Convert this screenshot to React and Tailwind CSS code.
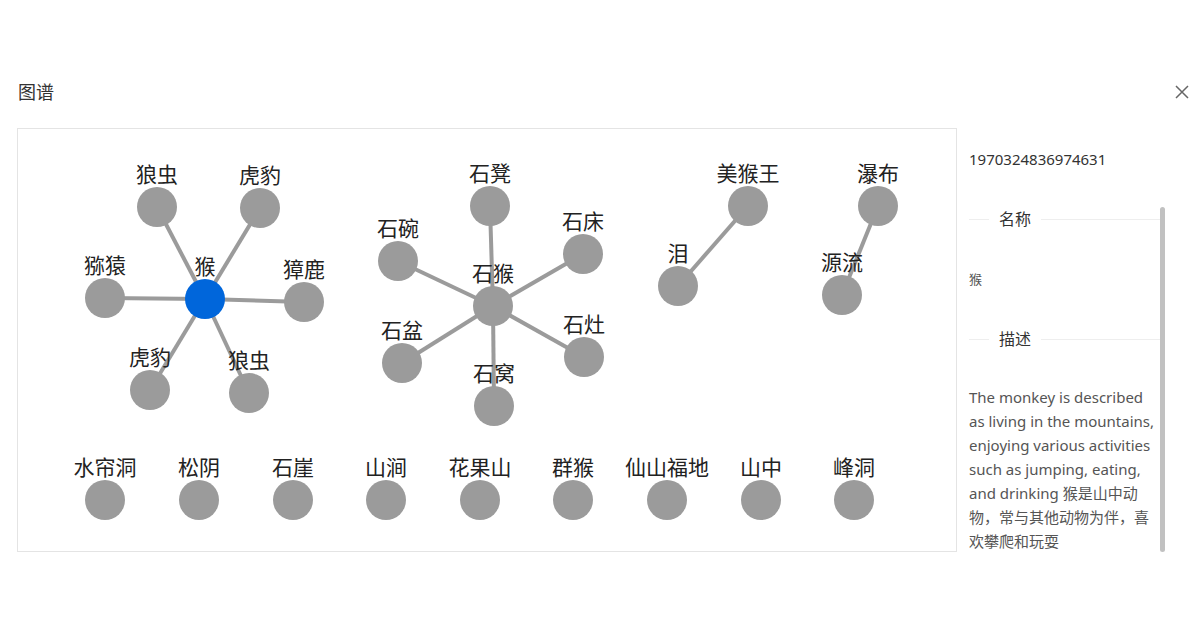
import { useMemo } from 'react'

const OX = 18
const OY = 129

// page coordinates, shifted into the canvas below
const nodes = [
  { id: 'hou', label: '猴', x: 205, y: 299, active: true },
  { id: 'lc1', label: '狼虫', x: 157, y: 207 },
  { id: 'hb1', label: '虎豹', x: 260, y: 208 },
  { id: 'my', label: '猕猿', x: 105, y: 298 },
  { id: 'zl', label: '獐鹿', x: 304, y: 302 },
  { id: 'hb2', label: '虎豹', x: 150, y: 390 },
  { id: 'lc2', label: '狼虫', x: 249, y: 393 },

  { id: 'sh', label: '石猴', x: 493, y: 306 },
  { id: 'sd', label: '石凳', x: 490, y: 206 },
  { id: 'sw', label: '石碗', x: 398, y: 261 },
  { id: 'sc', label: '石床', x: 583, y: 254 },
  { id: 'sp', label: '石盆', x: 402, y: 363 },
  { id: 'sz', label: '石灶', x: 584, y: 357 },
  { id: 'swo', label: '石窝', x: 494, y: 406 },

  { id: 'mhw', label: '美猴王', x: 748, y: 206 },
  { id: 'lei', label: '泪', x: 678, y: 286 },
  { id: 'pb', label: '瀑布', x: 878, y: 206 },
  { id: 'yl', label: '源流', x: 842, y: 295 },

  { id: 'slid', label: '水帘洞', x: 105, y: 500 },
  { id: 'sy', label: '松阴', x: 199, y: 500 },
  { id: 'sya', label: '石崖', x: 293, y: 500 },
  { id: 'sjd', label: '山涧', x: 386, y: 500 },
  { id: 'hgs', label: '花果山', x: 480, y: 500 },
  { id: 'qh', label: '群猴', x: 573, y: 500 },
  { id: 'xsfd', label: '仙山福地', x: 667, y: 500 },
  { id: 'szh', label: '山中', x: 761, y: 500 },
  { id: 'fd', label: '峰洞', x: 854, y: 500 },
]

const links = [
  ['hou', 'lc1'], ['hou', 'hb1'], ['hou', 'my'], ['hou', 'zl'], ['hou', 'hb2'], ['hou', 'lc2'],
  ['sh', 'sd'], ['sh', 'sw'], ['sh', 'sc'], ['sh', 'sp'], ['sh', 'sz'], ['sh', 'swo'],
  ['mhw', 'lei'], ['pb', 'yl'],
]

function Graph() {
  const byId = useMemo(() => Object.fromEntries(nodes.map(n => [n.id, n])), [])
  return (
    <svg width="938" height="422" className="block">
      {links.map(([a, b]) => (
        <line key={a + b}
          x1={byId[a].x - OX} y1={byId[a].y - OY}
          x2={byId[b].x - OX} y2={byId[b].y - OY}
          stroke="#9b9b9b" strokeWidth="4" />
      ))}
      {nodes.map(n => (
        <g key={n.id}>
          <circle cx={n.x - OX} cy={n.y - OY} r="20" fill={n.active ? '#0066db' : '#9b9b9b'} />
          <text x={n.x - OX} y={n.y - OY - 25} textAnchor="middle" fontSize="21" fill="#222"
            style={{ fontFamily: '"Noto Sans CJK SC", sans-serif' }}>
            {n.label}
          </text>
        </g>
      ))}
    </svg>
  )
}

function SectionDivider({ children }) {
  return (
    <div className="flex items-center h-6">
      <div className="w-[20px] h-px bg-[#eeeeee]" />
      <span className="px-[10px] text-[16px] text-[#333]">{children}</span>
      <div className="flex-1 h-px bg-[#eeeeee]" />
    </div>
  )
}

export default function App() {
  return (
    <div className="w-[1200px] h-[630px] bg-white relative overflow-hidden"
      style={{ fontFamily: '"Noto Sans", "Noto Sans CJK SC", sans-serif' }}>
      <div className="pt-16">
        <header className="h-14 flex items-center justify-between pl-[18px] pr-[8px]">
          <h1 className="text-[18px] text-[#333]">图谱</h1>
          <button className="w-5 h-5 flex items-center justify-center text-[#666]">
            <svg width="14" height="14" viewBox="0 0 14 14">
              <path d="M1 1 L13 13 M13 1 L1 13" stroke="#666" strokeWidth="1.5" />
            </svg>
          </button>
        </header>

        <div className="flex mt-2 pl-[17px]">
          <div className="w-[940px] h-[424px] border border-[#e4e4e4]">
            <Graph />
          </div>

          <aside className="w-[196px] ml-[12px] relative">
            <p className="pt-[21px] text-[15px] leading-5 text-[#333]">1970324836974631</p>
            <div className="mt-[38px]">
              <SectionDivider>名称</SectionDivider>
            </div>
            <p className="mt-[38px] text-[13px] leading-5 text-[#555]">猴</p>
            <div className="mt-[38px]">
              <SectionDivider>描述</SectionDivider>
            </div>
            <p className="mt-[34px] w-[192px] text-[15px] leading-6 text-[#555]">
              The monkey is described as living in the mountains, enjoying various activities such as jumping, eating, and drinking 猴是山中动物，常与其他动物为伴，喜欢攀爬和玩耍
            </p>
            <div className="absolute left-[191px] top-[79px] w-[5px] h-[345px] rounded-full bg-[#c1c1c1]" />
          </aside>
        </div>
      </div>
    </div>
  )
}
